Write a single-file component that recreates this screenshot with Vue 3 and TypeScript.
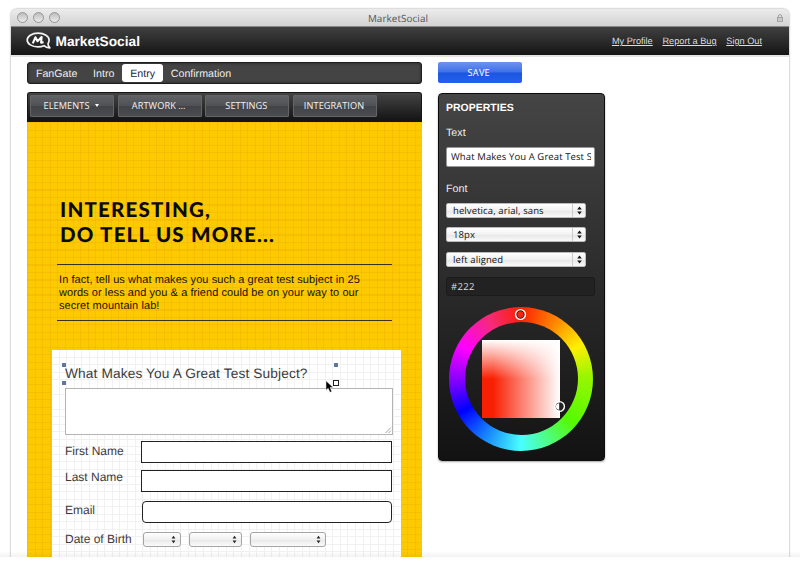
<script setup lang="ts">
import { ref } from 'vue'

interface Tab {
  id: string
  label: string
}

interface Action {
  label: string
  menu?: boolean
}

const account: string[] = ['My Profile', 'Report a Bug', 'Sign Out']

const tabs: Tab[] = [
  { id: 'fangate', label: 'FanGate' },
  { id: 'intro', label: 'Intro' },
  { id: 'entry', label: 'Entry' },
  { id: 'confirmation', label: 'Confirmation' },
]
const activeTab = ref('entry')

const actions: Action[] = [
  { label: 'ELEMENTS', menu: true },
  { label: 'ARTWORK …' },
  { label: 'SETTINGS' },
  { label: 'INTEGRATION' },
]

const fontOptions: string[] = ['helvetica, arial, sans', '18px', 'left aligned']
const birthFields: string[] = ['day', 'month', 'year']
const question = 'What Makes You A Great Test Subject?'
</script>

<template>
  <div class="viewport">
    <div class="window">
      <div class="titlebar">
        <div class="lights"><i></i><i></i><i></i></div>
        <span class="window-title">MarketSocial</span>
        <svg class="lock" width="6" height="8" viewBox="0 0 6 8">
          <path d="M1.4 3.6V2.2a1.6 1.6 0 0 1 3.2 0v1.4" fill="none" stroke="#9a9a9a" stroke-width=".9" />
          <rect x=".5" y="3.5" width="5" height="3.9" fill="#c9c9c9" stroke="#9a9a9a" stroke-width=".8" />
        </svg>
      </div>

      <header class="masthead">
        <svg class="logo" width="26" height="18" viewBox="0 0 26 18">
          <path
            d="M12 1.2C5.8 1.2 1.2 4.200 1.2 8s4.600 6.900 10.800 6.900c2.300 0 4.300-.4 6-1.200 1.500 1.500 3.300 2.200 5.900 2.100-1.400-1.300-1.900-2.500-1.900-4 .7-1.100 1.100-2.400 1.100-3.800C23.100 4.200 18.500 1.200 12 1.200Z"
            fill="none" stroke="#f4f4f4" stroke-width="1.700" stroke-linejoin="round" />
          <path d="M6.800 11.300 9.400 5.300 11.500 9.200 15.600 5 15.100 10.600 17.600 10.200" fill="none" stroke="#fff" stroke-width="2.100" stroke-linejoin="round" />
        </svg>
        <span class="brand">MarketSocial</span>
        <nav class="account">
          <a v-for="item in account" :key="item">{{ item }}</a>
        </nav>
      </header>

      <main class="workspace">
        <section class="editor">
          <nav class="tabs">
            <a
              v-for="tab in tabs"
              :key="tab.id"
              class="tab"
              :class="{ active: tab.id === activeTab }"
              @click="activeTab = tab.id"
            >{{ tab.label }}</a>
          </nav>

          <div class="toolbar">
            <button v-for="action in actions" :key="action.label" class="tool">
              {{ action.label }}<i v-if="action.menu" class="caret"></i>
            </button>
          </div>

          <div class="canvas">
            <h1>INTERESTING,<br />DO TELL US MORE...</h1>
            <p class="blurb">
              In fact, tell us what makes you such a great test subject in 25<br />
              words or less and you &amp; a friend could be on your way to our<br />
              secret mountain lab!
            </p>

            <div class="form">
              <div class="question">
                {{ question }}
                <i class="handle top-left"></i>
                <i class="handle bottom-left"></i>
                <i class="handle top-right"></i>
                <i class="handle active-handle"></i>
                <svg class="pointer" width="10" height="13" viewBox="0 0 10 13">
                  <path d="M1 .8V10.300L3.200 8.300 4.900 12.300 6.800 11.500 5.100 7.600H8.200Z" fill="#000" stroke="#fff" stroke-width=".5" />
                </svg>
              </div>
              <div class="answer">
                <svg width="8" height="8" viewBox="0 0 8 8">
                  <path d="M1.500 7 7 1.500M4.500 7 7 4.500" stroke="#999" stroke-width=".9" />
                </svg>
              </div>
              <div class="row first"><label>First Name</label><span class="field"></span></div>
              <div class="row last"><label>Last Name</label><span class="field"></span></div>
              <div class="row email"><label>Email</label><span class="field rounded"></span></div>
              <div class="row birth">
                <label>Date of Birth</label>
                <span v-for="f in birthFields" :key="f" class="mini-select" :class="f">
                  <svg width="5" height="9" viewBox="0 0 5 9"><path d="M.6 3.400 2.500.7 4.400 3.400ZM.6 5.600 2.500 8.300 4.400 5.600Z" fill="#222" /></svg>
                </span>
              </div>
            </div>
          </div>
        </section>

        <aside class="sidebar">
          <button class="save">SAVE</button>
          <div class="panel">
            <h2>PROPERTIES</h2>
            <div class="caption">Text</div>
            <div class="text-input"><span>{{ question }}</span></div>
            <div class="caption font-caption">Font</div>
            <div class="selects">
              <div v-for="option in fontOptions" :key="option" class="select">
                <span>{{ option }}</span>
                <i><svg width="5" height="9" viewBox="0 0 5 9"><path d="M.2 3.500 2.500.5 4.800 3.500ZM.2 5.500 2.500 8.500 4.800 5.500Z" fill="#111" /></svg></i>
              </div>
            </div>
            <div class="hex">#222</div>
            <div class="wheel">
              <div class="hole"><div class="shade"></div></div>
              <svg class="marker hue" width="13" height="13" viewBox="0 0 13 13">
                <circle cx="6.500" cy="6.500" r="3.800" fill="#f52410" stroke="#222" stroke-width="1.200" />
                <circle cx="6.500" cy="6.500" r="4.900" fill="none" stroke="#fff" stroke-width="1.400" />
              </svg>
              <svg class="marker tone" width="13" height="13" viewBox="0 0 13 13">
                <circle cx="6.500" cy="6.500" r="3.900" fill="#222" />
                <path d="M6.200 3.300a3.200 3.200 0 0 0 0 6.400Z" fill="#fff" />
                <circle cx="6.500" cy="6.500" r="4.900" fill="none" stroke="#fff" stroke-width="1.400" />
              </svg>
            </div>
          </div>
        </aside>
      </main>
    </div>
  </div>
</template>

<style>
body {
  margin: 0;
  background: #fff;
}
</style>

<style scoped>
* {
  box-sizing: border-box;
}

.viewport {
  position: relative;
  width: 800px;
  height: 557px;
  padding: 9px 11px 0;
  overflow: hidden;
  font-family: "Liberation Sans", Arial, sans-serif;
  text-rendering: geometricPrecision;
}

.viewport::after {
  content: "";
  position: absolute;
  left: 0;
  right: 0;
  bottom: 0;
  height: 6px;
  background: linear-gradient(rgba(0, 0, 0, 0), rgba(0, 0, 0, 0.05));
}

.window {
  height: 600px;
  border-radius: 6px 6px 0 0;
  background: #fff;
  box-shadow: 0 0 2px rgba(0, 0, 0, 0.5);
}

.titlebar {
  display: grid;
  grid-template-columns: 1fr auto 1fr;
  align-items: center;
  height: 18px;
  padding: 0 6px;
  border-bottom: 1px solid #888;
  border-radius: 6px 6px 0 0;
  background: linear-gradient(#ececec, #d2d2d2);
}

.lights {
  display: flex;
  gap: 5px;
}

.lights i {
  width: 11px;
  height: 11px;
  border: 1px solid #969696;
  border-radius: 50%;
  background: linear-gradient(#bdbdbd, #ececec);
}

.window-title {
  margin-right: 4px;
  font: 9.900px/16px "Open Sans", sans-serif;
  letter-spacing: 0.080px;
  color: #555;
}

.lock {
  justify-self: end;
}

.masthead {
  display: flex;
  align-items: center;
  height: 28px;
  padding: 0 27px 0 15px;
  background: linear-gradient(#404040, #151515);
  box-shadow: 0 2px 0 #e4e4e4;
}

.brand {
  margin-left: 3.500px;
  font-size: 13.7px;
  font-weight: bold;
  color: #fff;
}

.account {
  display: flex;
  gap: 9.700px;
  margin-left: auto;
  font-size: 9.200px;
  color: #ddd;
}

.account a {
  text-decoration: underline;
}

.workspace {
  display: flex;
  gap: 16px;
  padding: 7px 16px 0;
}

.editor {
  width: 395px;
}

.tabs {
  display: flex;
  align-items: center;
  height: 22px;
  padding: 0;
  border: 1px solid #1d1d1d;
  border-radius: 3px;
  background: #444;
  box-shadow: inset 0 0 3px #222;
}

.tab {
  height: 18px;
  padding: 0 7.900px;
  border-radius: 3px;
  font-size: 10.650px;
  line-height: 20px;
  color: #eee;
}

.tab.active {
  background: #fff;
  color: #1c2840;
}

.toolbar {
  display: flex;
  gap: 3.7px;
  height: 30px;
  margin-top: 8px;
  padding: 2px;
  border: 1px solid #151515;
  border-bottom-width: 2px;
  border-radius: 3px 3px 0 0;
  background: linear-gradient(#444, #151515);
}

.tool {
  width: 84px;
  height: 22px;
  padding: 0 2px 0 0;
  border: 1px solid #646468;
  border-radius: 1px;
  background: linear-gradient(#606164, #505154 49%, #424346 51%, #4b4c50);
  font: 9.2px/20px "Open Sans", sans-serif;
  letter-spacing: 0.080px;
  color: #f2f2f2;
}

.caret {
  display: inline-block;
  margin: 0 0 2px 5px;
  border: 2.500px solid transparent;
  border-top: 3px solid #fff;
  border-bottom: 0;
}

.canvas {
  height: 440px;
  padding: 76px 22px 0 25px;
  background:
    repeating-linear-gradient(90deg, rgba(215, 130, 0, 0.150) 0 1px, transparent 1px 7.600px),
    repeating-linear-gradient(rgba(215, 130, 0, 0.150) 0 1px, transparent 1px 7.500px),
    #fdca02;
}

h1 {
  margin: 0 0 0 8px;
  font: 900 20.5px/25px Lato, sans-serif;
  letter-spacing: 1.200px;
  color: #0b0a05;
}

.blurb {
  height: 57px;
  margin: 16px 8px 0 5px;
  padding: 9px 2px 0;
  border-top: 1px solid #3b3214;
  border-bottom: 1px solid #3b3214;
  font-size: 11px;
  line-height: 13px;
  letter-spacing: 0.07px;
  white-space: nowrap;
  color: #161200;
}

.form {
  width: 349px;
  height: 230px;
  margin-top: 29px;
  padding: 13px 0 0 13px;
  background:
    repeating-linear-gradient(90deg, transparent 0 6.600px, #f1f1f1 6.600px 7.600px),
    repeating-linear-gradient(transparent 0 6.500px, #f1f1f1 6.500px 7.500px),
    #fff;
  color: #3c3c3c;
}

.question {
  position: relative;
  height: 25px;
  font-size: 13.700px;
  line-height: 22px;
  letter-spacing: 0.130px;
}

.handle {
  position: absolute;
  width: 4px;
  height: 4px;
  background: #5f76a0;
}

.top-left {
  left: -3px;
  top: 0;
}

.bottom-left {
  left: -3px;
  top: 18px;
}

.top-right {
  left: 269px;
  top: 0;
}

.active-handle {
  left: 268px;
  top: 17px;
  width: 6px;
  height: 6px;
  border: 1px solid #222;
  background: #fff;
}

.pointer {
  position: absolute;
  left: 260px;
  top: 17px;
}

.answer {
  display: flex;
  align-items: flex-end;
  justify-content: flex-end;
  width: 328px;
  height: 47px;
  border: 1px solid #b4b4b4;
  background: #fff;
}

.row {
  display: flex;
  font-size: 12px;
}

.row label {
  width: 76px;
  white-space: nowrap;
  line-height: 14px;
}

.field {
  width: 251px;
  height: 22px;
  border: 1px solid #222;
  background: #fff;
}

.field.rounded {
  width: 250px;
  border-radius: 4px;
  margin-left: 1px;
}

.first {
  margin-top: 6px;
}

.last {
  margin-top: 7px;
}

.email {
  margin-top: 9px;
}

.first label {
  padding-top: 3px;
}

.last label {
  padding-top: 0;
}

.email label {
  padding-top: 2px;
}

.birth {
  margin-top: 9px;
}

.birth label {
  width: 78px;
  padding-top: 0;
}

.mini-select {
  display: flex;
  align-items: center;
  justify-content: flex-end;
  height: 15px;
  margin-right: 8px;
  padding-right: 4px;
  border: 1px solid #a5a5a5;
  border-radius: 3px;
  background: linear-gradient(#fff, #f0f0f0 50%, #e8e8e8 52%, #fafafa);
}

.day {
  width: 38px;
}

.month {
  width: 53px;
}

.year {
  width: 76px;
}

.sidebar {
  width: 167px;
}

.save {
  display: block;
  width: 83.500px;
  height: 21px;
  margin-top: 0;
  padding: 0 2px 0 0;
  border: 0;
  border-radius: 2px;
  background: linear-gradient(#6d93ee, #3d6fe6 49%, #1b56e0 51%, #2560ea);
  font: 9.2px/21px "Open Sans", sans-serif;
  letter-spacing: 0.250px;
  color: #fff;
}

.panel {
  height: 368px;
  margin-top: 10px;
  padding: 8px 7px 0;
  border: 1px solid #0c0c0c;
  border-radius: 4px;
  background: linear-gradient(#454545, #121212);
  box-shadow: 0 1px 2px rgba(0, 0, 0, 0.35);
}

h2 {
  margin: 0;
  font-size: 10.500px;
  line-height: 12px;
  color: #fff;
}

.caption {
  margin-top: 13px;
  font-size: 10.700px;
  line-height: 12px;
  color: #eee;
}

.text-input {
  width: 149px;
  height: 20px;
  margin-top: 8px;
  padding: 0 3px 0 4px;
  border: 1px solid #999;
  border-radius: 2px;
  background: #fff;
  font: 9.500px/18px "Open Sans", sans-serif;
  letter-spacing: 0.100px;
  color: #111;
}

.text-input span {
  display: block;
  overflow: hidden;
  white-space: nowrap;
}

.font-caption {
  margin-top: 16px;
}

.selects {
  display: grid;
  gap: 9.300px;
  margin-top: 8px;
}

.select {
  display: flex;
  justify-content: space-between;
  width: 140px;
  height: 15px;
  padding-left: 6px;
  border: 1px solid #bbb;
  border-radius: 2px;
  background: linear-gradient(#fff, #f1f1f1 50%, #e6e6e6 52%, #fafafa);
  font: 9.500px/13px "Open Sans", sans-serif;
  letter-spacing: 0.100px;
  color: #111;
}

.select i {
  display: flex;
  align-items: center;
  justify-content: center;
  width: 13px;
  border-left: 1px solid #ccc;
}

.hex {
  width: 149px;
  height: 19px;
  margin-top: 10px;
  padding-left: 4px;
  border: 1px solid #1b1b1b;
  border-radius: 3px;
  background: #222;
  font: 9.500px/18px "Open Sans", sans-serif;
  letter-spacing: 0.300px;
  color: #ddd;
}

.wheel {
  position: relative;
  display: grid;
  place-items: center;
  width: 144px;
  height: 144px;
  margin: 11px 0 0 3px;
  border-radius: 50%;
  background: conic-gradient(#fb2005, #ff8a00 32deg, #fff000 60deg, #98f600 88deg, #55fa00 130deg, #48ffff 180deg, #1684ff 212deg, #0000ff 241deg, #8b00ff 270deg, #ff00ff 299deg, #f52a78 332deg, #fb2005);
}

.hole {
  display: grid;
  place-items: center;
  width: 113px;
  height: 113px;
  border-radius: 50%;
  background: linear-gradient(#252525, #171717);
}

.shade {
  width: 78px;
  height: 78px;
  background:
    linear-gradient(#fff, rgba(255, 255, 255, 0) 50%),
    linear-gradient(90deg, #f91f02 14%, #fff);
}

.marker {
  position: absolute;
}

.hue {
  left: 65px;
  top: 1px;
}

.tone {
  left: 104px;
  top: 93px;
}
</style>
